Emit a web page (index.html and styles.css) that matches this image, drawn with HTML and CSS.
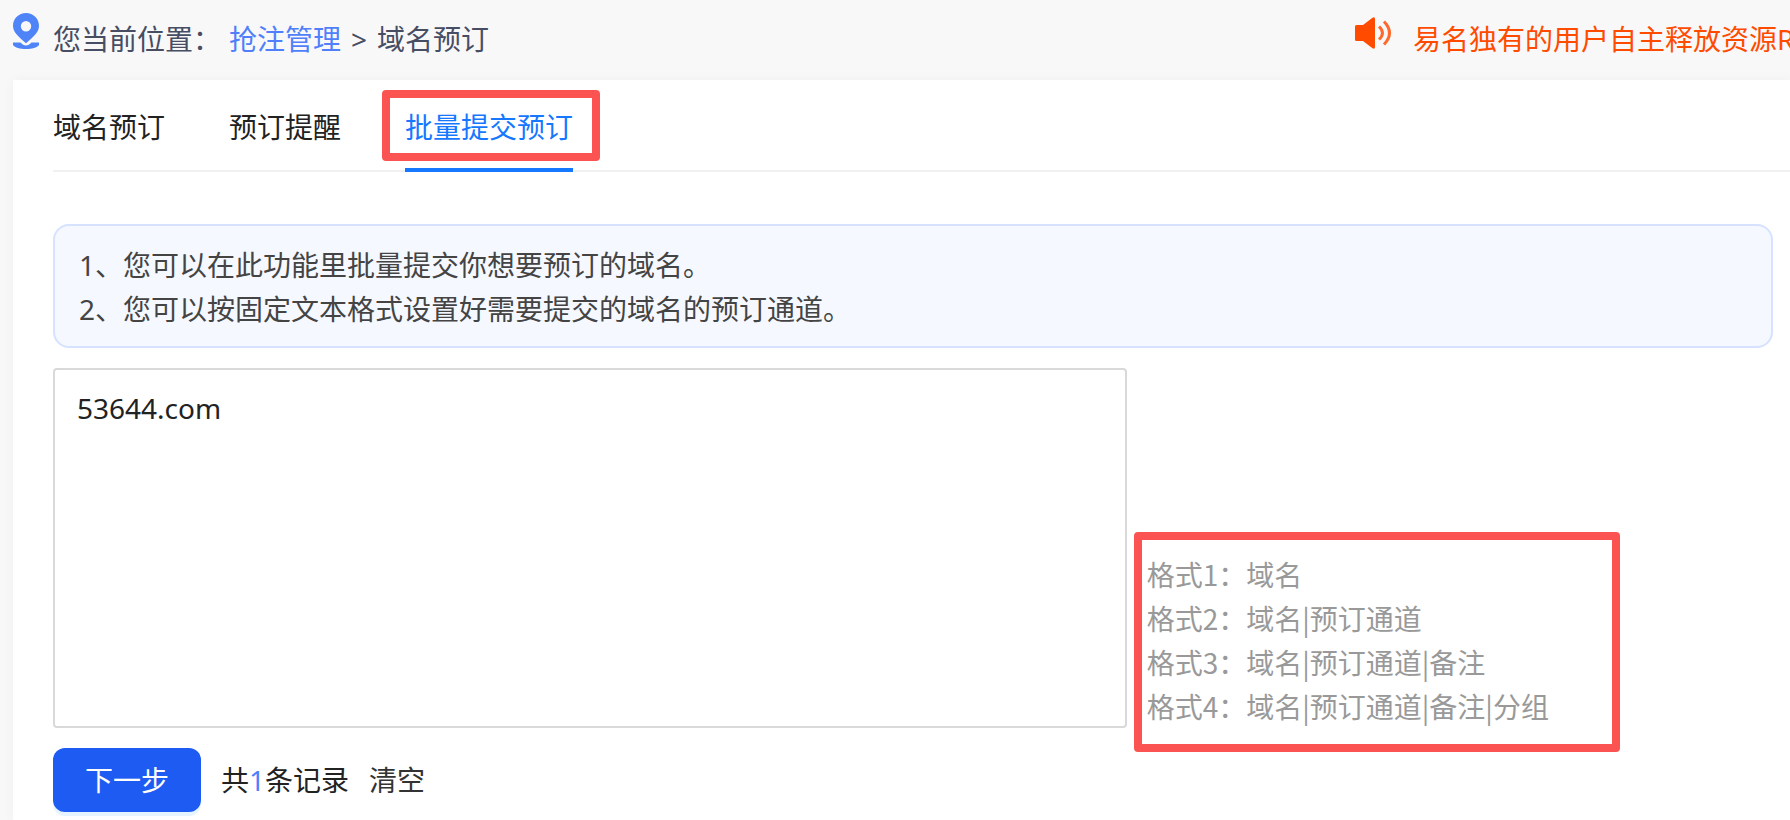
FILE: index.html
```html
<!DOCTYPE html>
<html lang="zh-CN">

<head>
    <meta charset="UTF-8">
    <meta name="viewport" content="width=device-width, initial-scale=1.0">
    <title>批量提交预订</title>
    <link rel="stylesheet" href="styles.css">
</head>

<body>

    <!-- 顶部位置导航和公告 -->
    <header class="top-bar">
        <svg class="icon-pin" viewBox="0 0 26 36" aria-hidden="true">
            <path fill-rule="evenodd" d="M13 0C5.800 0 0 5.600 0 12.800c0 6.400 5 10.400 13 17.400 8-7 13-11 13-17.400C26 5.600 20.200 0 13 0zm0 8a5.200 5.200 0 1 1 0 10.400A5.200 5.200 0 0 1 13 8z" />
            <path d="M0 29.500h7.500c1.800 1.700 3.500 3 5.500 3s3.700-1.300 5.500-3H26v2.500c-2 2.600-7 4-13 4s-11-1.400-13-4z" />
        </svg>
        <nav class="crumbs">
            <span>您当前位置：</span>
            <a href="#">抢注管理</a>
            <span class="crumb-sep">&gt;</span>
            <span>域名预订</span>
        </nav>
        <div class="news">
            <svg class="icon-horn" viewBox="0 0 38 32" aria-hidden="true">
                <path d="M2.500 8H9L18.500.8Q21-.5 21 2v28q0 2.500-2.500 1.200L9 24H2.500Q1 24 1 22.500v-13Q1 8 2.500 8z" />
                <path class="wave" d="M25 9.500q7 6.500 0 13M30 4.500q11 11.500 0 23" />
            </svg>
            <a href="#">易名独有的用户自主释放资源R</a>
        </div>
    </header>

    <main class="panel">
        <nav class="tabs">
            <a class="tab" href="#">域名预订</a>
            <a class="tab" href="#">预订提醒</a>
            <a class="tab active" href="#">批量提交预订<i class="mark mark-tab"></i></a>
        </nav>

        <!-- 功能说明 -->
        <div class="tips">
            <p>1、您可以在此功能里批量提交你想要预订的域名。</p>
            <p>2、您可以按固定文本格式设置好需要提交的域名的预订通道。</p>
        </div>

        <form>
            <div class="entry">
                <textarea id="domains" aria-label="域名" spellcheck="false">53644.com</textarea>
                <label class="formats" for="domains">
                    <span>格式1：域名</span>
                    <span>格式2：域名|预订通道</span>
                    <span>格式3：域名|预订通道|备注</span>
                    <span>格式4：域名|预订通道|备注|分组</span>
                    <i class="mark mark-formats"></i>
                </label>
            </div>
            <div class="actions">
                <button class="btn-next" type="button">下一步</button>
                <span>共<b id="count">1</b>条记录</span>
                <button class="btn-clear" type="button">清空</button>
            </div>
        </form>
    </main>

</body>

</html>
```
FILE: styles.css
```css
* {
    margin: 0;
    padding: 0;
    box-sizing: border-box;
}

body {
    min-height: 100vh;
    display: flex;
    flex-direction: column;
    overflow: hidden;
    background: #f8f8f8;
    color: #222;
    font: 28px/44px "Noto Sans", "Noto Sans CJK SC", sans-serif;
}

a {
    color: inherit;
    text-decoration: none;
}

button,
textarea {
    font: inherit;
    color: inherit;
}

/* 顶部 */
.top-bar {
    display: flex;
    align-items: flex-start;
    height: 80px;
    padding: 13px 0 0 13px;
    line-height: 52px;
    white-space: nowrap;
}

.icon-pin {
    flex: none;
    width: 26px;
    height: 36px;
    margin-right: 14px;
    fill: #4f83f8;
}

.crumbs {
    display: flex;
    gap: 8px;
    color: #474d63;
}

.crumbs a {
    color: #4f7ffa;
}

.crumb-sep {
    padding: 0 2px;
}

.news {
    display: flex;
    align-items: flex-start;
    gap: 21px;
    width: 436px;
    margin-left: auto;
    overflow: hidden;
    color: #ff4b00;
}

.icon-horn {
    flex: none;
    width: 38px;
    height: 32px;
    margin-top: 4px;
    fill: #ff4b00;
}

.icon-horn .wave {
    fill: none;
    stroke: #ff6a2c;
    stroke-width: 3;
}

/* 主体 */
.panel {
    flex: 1;
    margin-left: 13px;
    padding: 0 0 8px 40px;
    background: #fff;
    box-shadow: 0 0 12px rgba(0, 0, 0, 0.04);
}

.tabs {
    display: flex;
    gap: 64px;
    border-bottom: 2px solid #f0f0f0;
}

.tab {
    position: relative;
    height: 92px;
    margin-bottom: -2px;
    line-height: 94px;
}

.tab.active {
    color: #1677ff;
    border-bottom: 4px solid #1677ff;
}

/* 红色标注框 */
.mark {
    position: absolute;
    border: 8px solid #fb5252;
    border-radius: 4px;
    pointer-events: none;
}

.mark-tab {
    top: 10px;
    bottom: 7px;
    left: -23px;
    right: -27px;
}

.mark-formats {
    top: -20px;
    bottom: -24px;
    left: -13px;
    width: 486px;
}

.tips {
    margin: 52px 17px 20px 0;
    padding: 17px 24px 15px;
    border: 2px solid #d6e2ff;
    border-radius: 16px;
    background: #f5f8ff;
    color: #444;
}

.entry {
    display: grid;
    grid-template-columns: 12fr 7fr;
    align-items: end;
    gap: 20px;
    margin: 0 17px 20px 0;
}

.entry textarea {
    display: block;
    width: 100%;
    height: 360px;
    padding: 16px 22px;
    border: 2px solid #d9d9d9;
    border-radius: 4px;
    outline: none;
    resize: none;
}

/* 竖线用中文字体，间距更窄 */
.formats {
    position: relative;
    color: #999;
    font-family: "Noto Sans CJK SC", sans-serif;
}

.formats span {
    display: block;
}

.actions {
    display: flex;
    align-items: center;
    gap: 20px;
}

.actions b {
    color: #4f7ffa;
    font-weight: normal;
}

.btn-next {
    height: 64px;
    padding: 0 32px;
    border: 0;
    border-radius: 12px;
    background: #1d5bf3;
    box-shadow: 0 4px 0 #e6f4ff;
    color: #fff;
    cursor: pointer;
}

.btn-clear {
    border: 0;
    background: none;
    color: #333;
    cursor: pointer;
}
```
